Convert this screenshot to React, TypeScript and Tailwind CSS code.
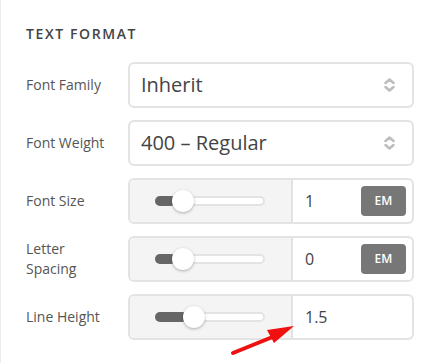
import type { ReactNode } from "react"

function Chevrons() {
  return (
    <svg width="11" height="14" viewBox="0 0 11 14" fill="none" stroke="#bdbdbd" strokeWidth="2.5" strokeLinecap="round" strokeLinejoin="round">
      <path d="M1.5 5 L5.5 1.5 L9.5 5" />
      <path d="M1.5 9 L5.5 12.5 L9.5 9" />
    </svg>
  )
}

function Row({ label, children }: { label: ReactNode; children: ReactNode }) {
  return (
    <div className="flex items-center">
      <div className="w-[88px] mr-[14px] text-[14px] leading-[20px] text-[#555]">{label}</div>
      {children}
    </div>
  )
}

function SelectBox({ value }: { value: string }) {
  return (
    <div className="flex h-[46px] w-[286px] items-center justify-between rounded-[6px] border-2 border-[#e3e3e3] bg-white pl-[11px] pr-[17px]">
      <span className="text-[20px] text-[#444]">{value}</span>
      <Chevrons />
    </div>
  )
}

function SliderBox({ value, fill, unit }: { value: string; fill: number; unit?: boolean }) {
  return (
    <div className="flex h-[46px] w-[286px] overflow-hidden rounded-[6px] border-2 border-[#e3e3e3] bg-white">
      <div className="flex w-[163px] items-center border-r-2 border-[#e3e3e3] bg-[#f4f4f4] pl-[25px]">
        <div className="relative h-[10px] w-[110px] rounded-full border-2 border-[#e3e3e3] bg-white">
          <div className="absolute -left-[2px] -top-[2px] h-[10px] rounded-full bg-[#666]" style={{ width: fill + 4 }} />
          <div
            className="absolute -top-[8px] h-[22px] w-[22px] rounded-full bg-white shadow-[0_1px_3px_rgba(0,0,0,0.3)]"
            style={{ left: fill - 2 }}
          />
        </div>
      </div>
      <div className="flex flex-1 items-center justify-between pl-[12px] pr-[6px]">
        <span className="text-[16px] text-[#444]">{value}</span>
        {unit && (
          <div className="flex h-[30px] w-[45px] items-center justify-center rounded-[4px] bg-[#777] text-[12px] font-semibold text-white">
            EM
          </div>
        )}
      </div>
    </div>
  )
}

export default function App() {
  return (
    <div className="relative h-[363px] w-[431px] border-l border-[#ececec] bg-white pl-[25px] pt-[24px]" style={{ fontFamily: '"Open Sans", "Noto Sans", sans-serif' }}>
      <h3 className="text-[14px] leading-[20px] font-semibold tracking-[1.6px] text-[#444]">TEXT FORMAT</h3>

      <div className="mt-[18px] flex flex-col gap-[12px]">
        <Row label="Font Family">
          <SelectBox value="Inherit" />
        </Row>
        <Row label="Font Weight">
          <SelectBox value="400 – Regular" />
        </Row>
        <Row label="Font Size">
          <SliderBox value="1" fill={17} unit />
        </Row>
        <Row label="Letter Spacing">
          <SliderBox value="0" fill={17} unit />
        </Row>
        <Row label="Line Height">
          <SliderBox value="1.5" fill={28} />
        </Row>
      </div>

      {/* annotation arrow */}
      <svg className="absolute left-[228px] top-[322px]" width="70" height="36" viewBox="0 0 70 36">
        <path d="M4 31 L46 14" stroke="#f01010" strokeWidth="4" strokeLinecap="round" />
        <polygon points="65,4 38,8 45,21" fill="#f01010" />
      </svg>
    </div>
  )
}
